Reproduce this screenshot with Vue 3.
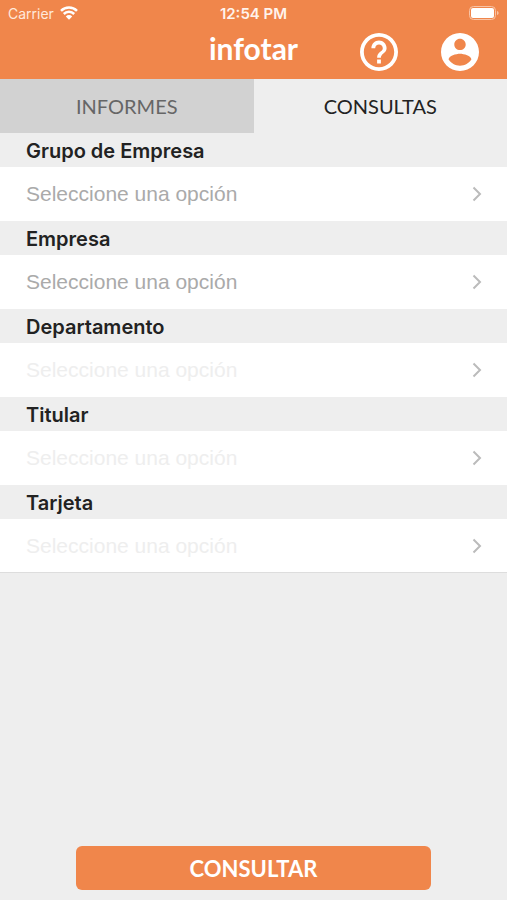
<script setup>
import { ref } from 'vue'

const activeTab = ref('consultas')

const tabs = [
  { id: 'informes', label: 'INFORMES' },
  { id: 'consultas', label: 'CONSULTAS' }
]

const fields = [
  { id: 'grupo', label: 'Grupo de Empresa', enabled: true },
  { id: 'empresa', label: 'Empresa', enabled: true },
  { id: 'departamento', label: 'Departamento', enabled: false },
  { id: 'titular', label: 'Titular', enabled: false },
  { id: 'tarjeta', label: 'Tarjeta', enabled: false }
]
</script>

<template>
  <div class="screen">
    <header class="header">
      <div class="status-bar">
        <div class="carrier">
          <span>Carrier</span>
          <svg class="wifi" viewBox="0 0 18 14">
            <path d="M1 4.800a11.300 11.300 0 0 1 16 0M3.800 8a7.300 7.300 0 0 1 10.400 0" />
            <path class="wifi-dot" d="M5.800 10.400a4.500 4.500 0 0 1 6.400 0L9 13.800z" />
          </svg>
        </div>
        <span class="time">12:54 PM</span>
        <svg class="battery" viewBox="0 0 30 14">
          <rect class="battery-case" x="0.5" y="0.5" width="26" height="13" rx="4" />
          <rect x="2" y="2" width="23" height="10" rx="2" />
          <path class="battery-cap" d="M28 5v4c1-.3 1.6-1 1.6-2S29 5.300 28 5z" />
        </svg>
      </div>
      <div class="title-bar">
        <h1 class="title">infotar</h1>
        <div class="actions">
          <button type="button" class="icon-button" aria-label="Ayuda">
            <svg viewBox="2 2 20 20">
              <path d="M11 18h2v-2h-2v2zm1-16C6.480 2 2 6.480 2 12s4.480 10 10 10 10-4.480 10-10S17.520 2 12 2zm0 18c-4.410 0-8-3.590-8-8s3.590-8 8-8 8 3.590 8 8-3.590 8-8 8zm0-14c-2.210 0-4 1.790-4 4h2c0-1.100.9-2 2-2s2 .9 2 2c0 2-3 1.750-3 5h2c0-2.250 3-2.500 3-5 0-2.210-1.790-4-4-4z" />
            </svg>
          </button>
          <button type="button" class="icon-button" aria-label="Perfil">
            <svg viewBox="2 2 20 20">
              <path d="M12 2C6.480 2 2 6.480 2 12s4.480 10 10 10 10-4.480 10-10S17.520 2 12 2zm0 3c1.660 0 3 1.340 3 3s-1.340 3-3 3-3-1.340-3-3 1.340-3 3-3zm0 14.200c-2.500 0-4.710-1.280-6-3.220.03-1.990 4-3.080 6-3.080 1.990 0 5.970 1.090 6 3.080-1.290 1.940-3.500 3.220-6 3.220z" />
            </svg>
          </button>
        </div>
      </div>
    </header>

    <nav class="tabs">
      <button
        v-for="tab in tabs"
        :key="tab.id"
        type="button"
        class="tab"
        :class="{ active: activeTab === tab.id }"
        @click="activeTab = tab.id"
      >{{ tab.label }}</button>
    </nav>

    <main class="content">
      <div v-for="field in fields" :key="field.id" class="field">
        <label class="field-label" :for="field.id">{{ field.label }}</label>
        <button :id="field.id" type="button" class="field-select" :disabled="!field.enabled">
          <span>Seleccione una opción</span>
          <svg class="chevron" viewBox="0 0 10 16">
            <path d="M1.500 1.500L8 8l-6.500 6.500" />
          </svg>
        </button>
      </div>
    </main>

    <footer class="footer">
      <button type="button" class="submit">CONSULTAR</button>
    </footer>
  </div>
</template>

<style>
body {
  margin: 0;
  background: #eeeeee;
}
</style>

<style scoped>
.screen {
  display: flex;
  flex-direction: column;
  min-height: 100vh;
  background: #eeeeee;
  color: #222222;
  font-family: Inter, "Liberation Sans", sans-serif;
}

button {
  margin: 0;
  padding: 0;
  border: none;
  background: none;
  color: inherit;
  font-family: inherit;
  cursor: pointer;
}

.header {
  background: #f0864b;
  color: #ffffff;
}

.status-bar {
  display: grid;
  grid-template-columns: 1fr auto 1fr;
  align-items: center;
  height: 26px;
  padding: 0 8px;
  font-size: 14px;
}

.carrier {
  display: flex;
  align-items: center;
  gap: 6px;
  color: #ffe9dc;
}

.wifi {
  width: 18px;
  height: 14px;
  fill: none;
  stroke: #ffffff;
  stroke-width: 2.5;
}

.wifi-dot {
  fill: #ffffff;
  stroke: none;
}

.time {
  color: #fff3ec;
  font-size: 15px;
  font-weight: 600;
}

.battery {
  width: 30px;
  height: 14px;
  fill: #ffffff;
  justify-self: end;
}

.battery-case {
  fill: none;
  stroke: #f8c3a5;
}

.battery-cap {
  fill: #f8c3a5;
}

.title-bar {
  display: grid;
  grid-template-columns: 1fr auto 1fr;
  align-items: center;
  box-sizing: border-box;
  height: 53px;
  padding: 0 28px 2px;
}

.title {
  grid-column: 2;
  margin: 0;
  padding-bottom: 8px;
  font-family: Lato, sans-serif;
  font-size: 30px;
  font-weight: 700;
  line-height: 36px;
}

.actions {
  display: flex;
  justify-content: flex-end;
  gap: 43px;
}

.icon-button {
  width: 38px;
  height: 38px;
}

.icon-button svg {
  display: block;
  width: 100%;
  height: 100%;
  fill: #ffffff;
}

.tabs {
  display: grid;
  grid-template-columns: 1fr 1fr;
}

.tab {
  height: 54px;
  background: #d2d2d2;
  color: #666666;
  font-family: Lato, sans-serif;
  font-size: 20px;
}

.tab.active {
  background: #eeeeee;
  color: #222222;
}

.content {
  flex: 1;
}

.field-label {
  display: block;
  padding: 2px 26px 0;
  font-size: 20px;
  font-weight: 600;
  line-height: 32px;
}

.field-select {
  display: flex;
  align-items: center;
  justify-content: space-between;
  width: 100%;
  height: 54px;
  padding: 0 25px 0 26px;
  background: #ffffff;
  color: #aaaaaa;
  font-family: "Liberation Sans", Arial, sans-serif;
  font-size: 21px;
}

.field-select:disabled {
  color: #eeeeee;
  cursor: default;
}

.field:last-child .field-select {
  border-bottom: 1px solid #dddddd;
}

.chevron {
  width: 10px;
  height: 16px;
  fill: none;
  stroke: #bbbbbb;
  stroke-width: 2;
}

.footer {
  display: flex;
  justify-content: center;
  padding: 10px 0;
}

.submit {
  width: 70%;
  height: 44px;
  border-radius: 6px;
  background: #f0864b;
  color: #ffffff;
  font-family: Lato, sans-serif;
  font-size: 22px;
  font-weight: 700;
}
</style>
